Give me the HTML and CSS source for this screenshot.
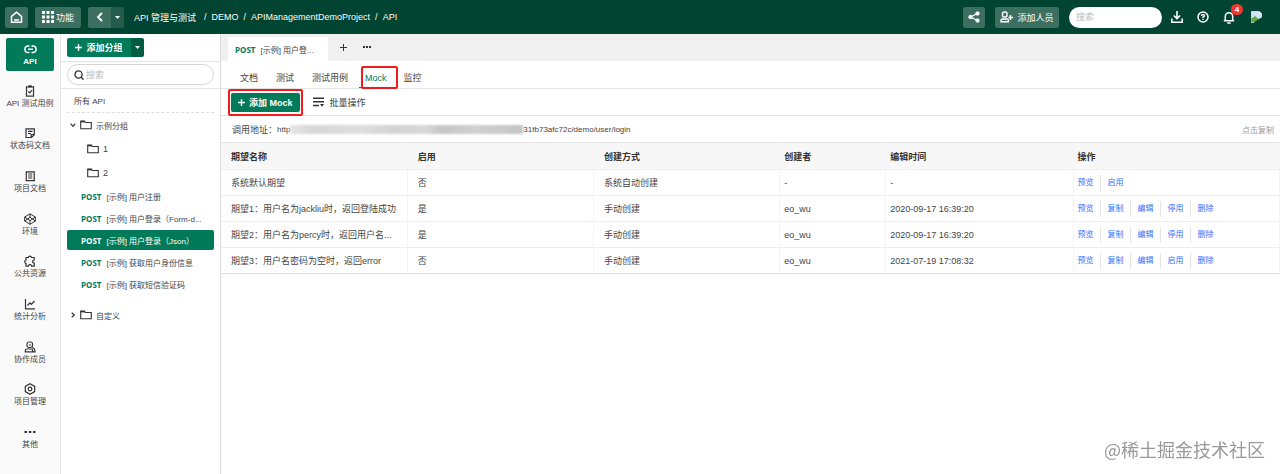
FILE: index.html
```
<!DOCTYPE html>
<html lang="zh-CN">
<head>
    <meta charset="UTF-8">
    <meta name="viewport" content="width=device-width, initial-scale=1.0">
    <title>API 管理与测试</title>
    <link rel="stylesheet" href="styles.css">
</head>
<body>

    <header class="topbar">
        <button class="top-btn home-btn" aria-label="首页">
            <svg width="13" height="13" viewBox="0 0 13 13" fill="none" stroke="#fff" stroke-width="1.5"><path d="M1.5 5.3 6.5 1.2l5 4.1v6h-10z"/><path d="M4 9h5"/></svg>
        </button>
        <button class="top-btn func-btn">
            <svg width="12" height="12" viewBox="0 0 12 12" fill="#fff"><path d="M0 0h3v3H0zM4.5 0h3v3h-3zM9 0h3v3H9zM0 4.5h3v3H0zM4.5 4.5h3v3h-3zM9 4.5h3v3H9zM0 9h3v3H0zM4.5 9h3v3h-3zM9 9h3v3H9z"/></svg>
            功能
        </button>
        <div class="back-group">
            <button class="top-btn back-btn" aria-label="返回">
                <svg width="8" height="10" viewBox="0 0 8 10" fill="none" stroke="#fff" stroke-width="1.8"><path d="M6 1 2 5l4 4"/></svg>
            </button>
            <button class="top-btn back-more" aria-label="历史">
                <svg width="5" height="3" viewBox="0 0 5 3" fill="#fff"><path d="M0 0h5L2.5 3z"/></svg>
            </button>
        </div>
        <nav class="crumbs">
            <a href="#">API 管理与测试</a>
            <span class="sep first">/</span>
            <a href="#">DEMO</a>
            <span class="sep">/</span>
            <a href="#">APIManagementDemoProject</a>
            <span class="sep">/</span>
            <a href="#">API</a>
        </nav>
        <div class="top-right">
            <button class="top-btn share-btn" aria-label="分享">
                <svg width="12" height="12" viewBox="0 0 12 12" fill="#fff" stroke="#fff"><path d="M9.5 2.5 2.5 6l7 3.5" fill="none" stroke-width="1.3"/><circle cx="9.5" cy="2.5" r="1.7"/><circle cx="2.5" cy="6" r="1.7"/><circle cx="9.5" cy="9.5" r="1.7"/></svg>
            </button>
            <button class="top-btn invite-btn">
                <svg width="13" height="12" viewBox="0 0 13 12" fill="none" stroke="#fff" stroke-width="1.4"><rect x="2.5" y="1" width="4.5" height="5" rx="1.8"/><path d="M1 10.800V9.500q0-1.500 1.500-1.500h4.500q1.500 0 1.500 1.500v1.300zM10.500 4v5M8.500 6.500H13"/></svg>
                添加人员
            </button>
            <input class="top-search" type="text" placeholder="搜索" aria-label="全局搜索">
            <button class="icon-btn" aria-label="下载">
                <svg width="12" height="12" viewBox="0 0 12 12" fill="none" stroke="#fff" stroke-width="1.6"><path d="M6 0v7.500M2.800 4.500 6 7.700l3.200-3.200M.8 7.500v3.700h10.400V7.500"/></svg>
            </button>
            <button class="icon-btn" aria-label="帮助">
                <svg width="12" height="12" viewBox="0 0 12 12" fill="none" stroke="#fff" stroke-width="1.5"><circle cx="6" cy="6" r="5"/><path d="M4.500 5q0-1.500 1.500-1.500T7.500 4.800Q7.500 5.800 6 6v1M6 7.800v1.200" stroke-width="1.3"/></svg>
            </button>
            <button class="icon-btn bell" aria-label="通知">
                <svg width="12" height="13" viewBox="0 0 12 13" fill="none" stroke="#fff" stroke-width="1.5"><path d="M.8 9.800h10.400M2.300 9.800V5.500a3.700 3.700 0 0 1 7.400 0v4.300M4.300 12h3.400"/></svg>
                <span class="badge">4</span>
            </button>
            <svg class="avatar" width="11" height="12" viewBox="0 0 11 12"><path d="M0 0h8l3 3v9H0z" fill="#d3e3f5"/><path d="M8 0v3h3z" fill="#fff"/><path d="M0 11V8l4-3 6 5v1z" fill="#5ba843"/><path d="m2 12 9-6v6z" fill="#004431"/><path d="M0 0h8l3 3v4M0 0v11.500h3" fill="none" stroke="#b7c2cc" stroke-width=".8"/></svg>
        </div>
    </header>

    <div class="layout">
        <aside class="sidebar">
            <a class="side-item active" href="#">
                <svg width="13" height="13" viewBox="0 0 13 13" fill="none" stroke="#fff" stroke-width="1.5"><path d="M5.500 3H4.200a3.300 3.300 0 0 0 0 6.600h1.300M7.500 3h1.300a3.300 3.300 0 0 1 0 6.600H7.500M4 6.300h5"/></svg>
                <b>API</b>
            </a>
            <nav class="side-list">
                <a class="side-item" href="#">
                    <svg class="ico" viewBox="0 0 12 12"><path d="M2.500 1.800h7v9.400h-7zM4.300 6.300l1.500 1.500 2.200-2.700"/><path d="M4.300 1.300h3.400" stroke-width="2"/></svg>
                    API 测试用例
                </a>
                <a class="side-item" href="#">
                    <svg class="ico" viewBox="0 0 12 12"><path d="M2 1.800h8.300v5.900L7.500 10.500H2zM4 4.300h4.500M4 6.500h3M7.200 10.300V7.500h2.900"/></svg>
                    状态码文档
                </a>
                <a class="side-item" href="#">
                    <svg class="ico" viewBox="0 0 12 12"><path d="M2.300 1.800h7.900v8.900H2.300zM1.500 10.700h9.500M4.200 4h4M4.200 6h4M4.200 8h4"/></svg>
                    项目文档
                </a>
                <a class="side-item" href="#">
                    <svg class="ico" viewBox="0 0 12 12"><path d="M6 .8 11.300 4v4L6 11.300.7 8V4zM.7 4 6 7.700 11.300 4M.7 8 6 4.300 11.300 8M6 .8v3.500M6 7.700v3.600" stroke-width="1"/></svg>
                    环境
                </a>
                <a class="side-item" href="#">
                    <svg class="ico" viewBox="0 0 12 12"><path d="M2 2.500h2.300a1.700 1.700 0 0 1 3.300 0h2.600V5a1.600 1.600 0 0 0 0 3.200v3H7.600a1.600 1.600 0 0 0-3.200 0H2V8.300A1.700 1.700 0 0 1 2 5z"/></svg>
                    公共资源
                </a>
                <a class="side-item" href="#">
                    <svg class="ico" viewBox="0 0 12 12"><path d="M1.500 1v9.800H11M3.500 7.500 6 4.800l1.300 1.500L10.500 3"/></svg>
                    统计分析
                </a>
                <a class="side-item" href="#">
                    <svg class="ico" viewBox="0 0 12 12"><rect x="3" y="1" width="5.5" height="5.5" rx="2"/><path d="M1.300 10.800V9.500Q1.300 8 3 8h4q1.700 0 1.700 1.500v1.300zM8 6.500q3 .5 3 4.300H8.700M5 4h2"/></svg>
                    协作成员
                </a>
                <a class="side-item" href="#">
                    <svg class="ico" viewBox="0 0 12 12"><path d="M6 .8 10.700 3.400v5.200L6 11.200 1.300 8.600V3.400z"/><circle cx="6" cy="6" r="1.8"/></svg>
                    项目管理
                </a>
                <a class="side-item" href="#">
                    <svg class="ico" viewBox="0 0 12 12"><path d="M.5 6h2.500M4.800 6h2.500M9 6h2.500" stroke-width="2.2"/></svg>
                    其他
                </a>
            </nav>
        </aside>

        <section class="tree">
            <div class="tree-head">
                <button class="green-btn">
                    <svg width="7" height="7" viewBox="0 0 7 7" stroke="#fff" stroke-width="1.4"><path d="M3.500 0v7M0 3.500h7"/></svg>
                    添加分组
                </button>
                <button class="green-more" aria-label="更多">
                    <svg width="5" height="3" viewBox="0 0 5 3" fill="#fff"><path d="M0 0h5L2.500 3z"/></svg>
                </button>
            </div>
            <div class="tree-search">
                <label class="search-box">
                    <svg width="10" height="10" viewBox="0 0 10 10" fill="none" stroke="#333" stroke-width="1.3"><circle cx="4.500" cy="4.500" r="3.6"/><path d="m7 7 2.500 2.700"/></svg>
                    <input type="text" placeholder="搜索" aria-label="搜索">
                </label>
            </div>
            <a class="all-api" href="#">所有 API</a>
            <a class="folder" href="#">
                <svg class="arrow" viewBox="0 0 6 6"><path d="m.7 1.700 2.300 2.600 2.300-2.600"/></svg>
                <svg class="dir" viewBox="0 0 12 10"><path d="M.7 8.800V1.200h3.800l1 1.300h5.800v6.300z"/><path d="M.5 1.500h4.500" stroke-width="1.8"/></svg>
                示例分组
            </a>
            <a class="folder sub" href="#">
                <svg class="dir" viewBox="0 0 12 10"><path d="M.7 8.800V1.200h3.800l1 1.300h5.800v6.300z"/><path d="M.5 1.500h4.500" stroke-width="1.8"/></svg>
                1
            </a>
            <a class="folder sub" href="#">
                <svg class="dir" viewBox="0 0 12 10"><path d="M.7 8.800V1.200h3.800l1 1.300h5.800v6.300z"/><path d="M.5 1.500h4.500" stroke-width="1.8"/></svg>
                2
            </a>
            <ul class="api-list">
                <li><a href="#"><b>POST</b><span>[示例] 用户注册</span></a></li>
                <li><a href="#"><b>POST</b><span>[示例] 用户登录（Form-d...</span></a></li>
                <li><a class="selected" href="#"><b>POST</b><span>[示例] 用户登录（Json）</span></a></li>
                <li><a href="#"><b>POST</b><span>[示例] 获取用户身份信息</span></a></li>
                <li><a href="#"><b>POST</b><span>[示例] 获取短信验证码</span></a></li>
            </ul>
            <a class="folder" href="#">
                <svg class="arrow" viewBox="0 0 6 6"><path d="m1.700.7 2.600 2.300-2.600 2.300"/></svg>
                <svg class="dir" viewBox="0 0 12 10"><path d="M.7 8.800V1.200h3.800l1 1.300h5.800v6.300z"/><path d="M.5 1.500h4.500" stroke-width="1.8"/></svg>
                自定义
            </a>
        </section>

        <main class="main">
            <div class="tabs">
                <a class="tab" href="#"><b>POST</b><span>[示例] 用户登...</span></a>
                <button class="tab-btn" aria-label="新建标签">
                    <svg width="7" height="7" viewBox="0 0 7 7" stroke="#333" stroke-width="1"><path d="M3.500 0v7M0 3.500h7"/></svg>
                </button>
                <button class="tab-btn" aria-label="更多标签">
                    <svg width="8" height="2" viewBox="0 0 8 2" fill="#333"><path d="M0 0h2v2H0zM3 0h2v2H3zM6 0h2v2H6z"/></svg>
                </button>
            </div>
            <nav class="subnav">
                <a href="#">文档</a>
                <a href="#">测试</a>
                <a href="#">测试用例</a>
                <a class="current" href="#">Mock</a>
                <a href="#">监控</a>
            </nav>
            <div class="toolbar">
                <div class="marked">
                    <button class="green-btn">
                        <svg width="7" height="7" viewBox="0 0 7 7" stroke="#fff" stroke-width="1.4"><path d="M3.500 0v7M0 3.500h7"/></svg>
                        添加 Mock
                    </button>
                </div>
                <button class="batch-btn">
                    <svg width="12" height="10" viewBox="0 0 12 10" fill="none" stroke="#333" stroke-width="1.5"><path d="M0 1.200h11M0 4.800h11M0 8.400h6"/><path d="M7 7h4L9 9.800z" fill="#333" stroke="none"/></svg>
                    批量操作
                </button>
            </div>
            <div class="address">
                <span class="address-label">调用地址：</span>
                <span>http</span>
                <span class="mosaic"></span>
                <span>31fb73afc72c/demo/user/login</span>
                <button class="copy-btn">点击复制</button>
            </div>
            <table class="mock-table">
                <colgroup>
                    <col class="c-name">
                    <col class="c-on">
                    <col class="c-way">
                    <col class="c-user">
                    <col class="c-time">
                    <col class="c-op">
                </colgroup>
                <thead>
                    <tr><th>期望名称</th><th>启用</th><th>创建方式</th><th>创建者</th><th>编辑时间</th><th>操作</th></tr>
                </thead>
                <tbody>
                    <tr>
                        <td>系统默认期望</td><td>否</td><td>系统自动创建</td><td>-</td><td>-</td>
                        <td class="ops"><a href="#">预览</a><a href="#">启用</a></td>
                    </tr>
                    <tr>
                        <td>期望1：用户名为jackliu时，返回登陆成功</td><td>是</td><td>手动创建</td><td>eo_wu</td><td>2020-09-17 16:39:20</td>
                        <td class="ops"><a href="#">预览</a><a href="#">复制</a><a href="#">编辑</a><a href="#">停用</a><a href="#">删除</a></td>
                    </tr>
                    <tr>
                        <td>期望2：用户名为percy时，返回用户名...</td><td>是</td><td>手动创建</td><td>eo_wu</td><td>2020-09-17 16:39:20</td>
                        <td class="ops"><a href="#">预览</a><a href="#">复制</a><a href="#">编辑</a><a href="#">停用</a><a href="#">删除</a></td>
                    </tr>
                    <tr>
                        <td>期望3：用户名密码为空时，返回error</td><td>否</td><td>手动创建</td><td>eo_wu</td><td>2021-07-19 17:08:32</td>
                        <td class="ops"><a href="#">预览</a><a href="#">复制</a><a href="#">编辑</a><a href="#">启用</a><a href="#">删除</a></td>
                    </tr>
                </tbody>
            </table>
        </main>
    </div>

    <div class="watermark">@稀土掘金技术社区</div>

</body>
</html>
```

FILE: styles.css
```
* {
    box-sizing: border-box;
}

body {
    margin: 0;
    min-height: 100vh;
    display: flex;
    flex-direction: column;
    font-family: "Liberation Sans", "Noto Sans CJK SC", sans-serif;
    font-size: 9px;
    color: #444;
    background: #fff;
}

a {
    color: inherit;
    text-decoration: none;
}

button, input {
    font: inherit;
    border: none;
    padding: 0;
    margin: 0;
    background: none;
    color: inherit;
}

button {
    cursor: pointer;
}

svg {
    flex: none;
}

/* top bar */
.topbar {
    display: flex;
    align-items: center;
    height: 34px;
    padding: 0 18px 0 5px;
    background: #004431;
    color: #fff;
}

.top-btn {
    display: flex;
    align-items: center;
    justify-content: center;
    height: 21px;
    border-radius: 2px;
    background: #3c6f60;
    color: #fff;
}

.home-btn {
    width: 23px;
    margin-right: 7px;
}

.func-btn {
    width: 46px;
    gap: 2px;
    margin-right: 7px;
}

.back-group {
    display: flex;
    margin-right: 10px;
}

.back-btn {
    width: 23px;
    border-radius: 2px 0 0 2px;
}

.back-more {
    width: 13px;
    border-radius: 0 2px 2px 0;
    background: #245c4b;
}

.crumbs {
    display: flex;
    align-items: center;
    gap: 5px;
    white-space: nowrap;
}

.sep.first {
    margin-left: 3px;
}

.top-right {
    display: flex;
    align-items: center;
    margin-left: auto;
}

.share-btn {
    width: 22px;
    margin-right: 10px;
}

.invite-btn {
    width: 64px;
    gap: 4px;
    margin-right: 10px;
}

.top-search {
    width: 93px;
    height: 21px;
    padding: 0 7px;
    border-radius: 11px;
    background: #fff;
    color: #333;
    margin-right: 9px;
}

.top-search::placeholder, .search-box input::placeholder {
    color: #bbb;
}

.icon-btn {
    position: relative;
    display: flex;
    width: 12px;
    margin-right: 14px;
}

.bell {
    margin-right: 16px;
}

.badge {
    position: absolute;
    top: -7px;
    left: 8px;
    width: 12px;
    height: 11px;
    border-radius: 6px;
    background: #f0362f;
    font-size: 8px;
    font-weight: bold;
    line-height: 11px;
    text-align: center;
}

.layout {
    display: flex;
    flex: 1;
}

/* left menu */
.sidebar {
    display: flex;
    flex-direction: column;
    width: 61px;
    padding: 4px 0 19px;
    border-right: 1px solid #e4e4e4;
    background: #fafafa;
    font-size: 8px;
}

.side-list {
    flex: 1;
    display: grid;
    grid-auto-rows: 1fr;
}

.side-item {
    display: flex;
    flex-direction: column;
    align-items: center;
    justify-content: center;
    gap: 1px;
    line-height: 12px;
    padding-top: 10px;
}

.side-item.active {
    height: 33px;
    margin: 0 6px;
    padding: 2px 0 0;
    gap: 0;
    border-radius: 2px;
    background: #007a58;
    color: #fff;
}

.ico {
    width: 12px;
    height: 12px;
    fill: none;
    stroke: #333;
    stroke-width: 1.2;
}

/* api tree */
.tree {
    width: 160px;
    border-right: 1px solid #ddd;
    font-size: 8px;
}

.tree-head {
    display: flex;
    align-items: center;
    height: 28px;
    padding: 0 6px;
    border-bottom: 1px solid #e4e4e4;
}

.green-btn {
    display: flex;
    align-items: center;
    justify-content: center;
    gap: 4px;
    height: 19px;
    padding: 0 7px;
    border-radius: 2px;
    background: #007a58;
    color: #fff;
    font-size: 9px;
    font-weight: bold;
}

.tree-head .green-btn {
    width: 64px;
    border-radius: 2px 0 0 2px;
}

.green-more {
    display: flex;
    align-items: center;
    justify-content: center;
    width: 13px;
    height: 19px;
    border-radius: 0 2px 2px 0;
    background: #005c42;
}

.tree-search {
    padding: 2px 6px 3px;
    border-bottom: 1px solid #e4e4e4;
}

.search-box {
    display: flex;
    align-items: center;
    gap: 2px;
    height: 21px;
    padding: 0 6px;
    border: 1px solid #d5d5d5;
    border-radius: 11px;
}

.search-box input {
    width: 100%;
    font-size: 9px;
    outline: none;
}

.all-api {
    display: flex;
    align-items: center;
    height: 24px;
    margin: 0 6px;
    padding-left: 7px;
    border-bottom: 1px dashed #ddd;
}

.folder {
    display: flex;
    align-items: center;
    gap: 4px;
    height: 24px;
    padding-left: 9px;
}

.folder.sub {
    padding-left: 26px;
    font-size: 9px;
}

.arrow {
    width: 6px;
    height: 6px;
    fill: none;
    stroke: #333;
    stroke-width: 1.2;
}

.dir {
    width: 12px;
    height: 10px;
    fill: none;
    stroke: #333;
    stroke-width: 1.1;
}

.api-list {
    list-style: none;
    margin: 0 0 8px;
    padding: 0 6px;
}

.api-list li {
    padding: 1px 0;
}

.api-list a, .tab {
    display: flex;
    align-items: center;
    gap: 5px;
    white-space: nowrap;
}

.api-list a {
    height: 20px;
    padding: 0 8px 0 14px;
    border-radius: 2px;
}

.api-list b, .tab b {
    color: #007a58;
    font-family: "Open Sans", "Noto Sans", sans-serif;
    font-size: 8px;
}

.api-list .selected {
    background: #007a58;
    color: #fff;
}

.api-list .selected b {
    color: #fff;
}

/* main area */
.main {
    flex: 1;
    min-width: 0;
}

.tabs {
    display: flex;
    align-items: flex-end;
    height: 27px;
    padding-left: 7px;
    background: #f0f0f0;
}

.tab {
    width: 100px;
    height: 24px;
    padding: 0 7px;
    background: #fff;
    font-size: 8px;
}

.tab-btn {
    display: flex;
    align-items: center;
    justify-content: center;
    width: 23px;
    height: 28px;
}

.tab + .tab-btn {
    margin-left: 4px;
}

.subnav {
    display: flex;
    gap: 18px;
    height: 28px;
    padding: 6px 19px 0;
    border-bottom: 1px solid #e4e4e4;
}

.subnav a {
    line-height: 22px;
}

.subnav .current {
    position: relative;
    color: #007a58;
    margin: 0 -7px;
    padding: 0 6px;
    border-bottom: 1px solid #007a58;
}

/* red frames around the steps being explained */
.subnav .current::after {
    content: "";
    position: absolute;
    inset: -1px -5px -2px 2px;
    border: 2px solid #f01c1c;
    border-radius: 2px;
}

.toolbar {
    display: flex;
    align-items: center;
    gap: 10px;
    height: 27px;
    padding-left: 7px;
    border-bottom: 1px solid #e4e4e4;
}

.marked {
    padding: 2px 1px;
    border: 2px solid #f01c1c;
    border-radius: 2px;
}

.batch-btn {
    display: flex;
    align-items: center;
    gap: 5px;
}

.address {
    display: flex;
    align-items: center;
    height: 26px;
    padding: 0 6px 0 11px;
    font-size: 8px;
}

.address-label {
    font-size: 9px;
}

.mosaic {
    width: 233px;
    height: 9px;
    background: linear-gradient(90deg, #e6e6e6 0, #d6d6d6 10%, #dedede 30%, #d2d2d2 45%, #d9d9d9 58%, #c6c6c6 65%, #d0d0d0 80%, #c4c4c4 100%);
    filter: blur(1px);
}

.copy-btn {
    margin-left: auto;
    color: #999;
}

.mock-table {
    width: 100%;
    table-layout: fixed;
    border-collapse: collapse;
    border-bottom: 1px solid #ddd;
}

.c-name, .c-on, .c-way {
    width: 17.6%;
}

.c-user {
    width: 10%;
}

.c-time {
    width: 17.7%;
}

.mock-table th, .mock-table td {
    height: 26px;
    padding: 0 4px 0 10px;
    text-align: left;
    white-space: nowrap;
    border-top: 1px solid #eee;
    border-right: 1px solid #f4f4f4;
}

.mock-table th:nth-child(n+4), .mock-table td:nth-child(n+4) {
    padding-left: 4px;
}

.mock-table th {
    height: 27px;
    background: #f7f7f7;
    color: #333;
    border-top-color: #e4e4e4;
}

.ops {
    font-size: 8px;
}

.ops a {
    display: inline-block;
    color: #3370ff;
    line-height: 16px;
    padding-right: 6px;
    margin-right: 7px;
    border-right: 1px solid #e4e4e4;
}

.ops a:last-child {
    border-right: none;
}

.watermark {
    position: fixed;
    right: 15px;
    bottom: 12px;
    font-family: "Noto Sans CJK SC", sans-serif;
    font-size: 18px;
    line-height: 26px;
    color: #999;
}
```
